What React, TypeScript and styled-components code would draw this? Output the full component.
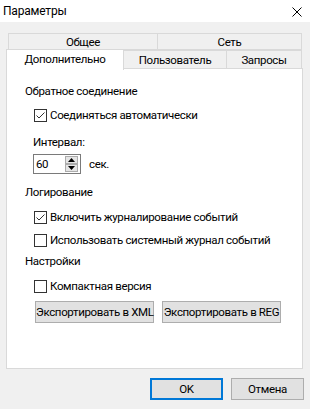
import styled, { createGlobalStyle, css } from "styled-components";

const GlobalStyle = createGlobalStyle`
  html, body {
    margin: 0;
    padding: 0;
    background: #f0f0f0;
  }
  * {
    box-sizing: border-box;
  }
`;

const font = `Roboto, "Liberation Sans", Arial, sans-serif`;

const StyledWindow = styled.div`
  width: 310px;
  height: 409px;
  background: #f0f0f0;
  display: flex;
  flex-direction: column;
  font-family: ${font};
  font-size: 11.5px;
  letter-spacing: -0.35px;
  color: #000;
  overflow: hidden;
`;

const StyledTitleBar = styled.div`
  height: 22px;
  background: #fff;
  display: flex;
  align-items: center;
  justify-content: space-between;
  padding: 0 8px 0 3px;
  font-size: 12px;
  letter-spacing: -0.2px;
`;

const StyledCloseButton = styled.span`
  width: 10px;
  height: 10px;
  display: flex;
  margin-top: 2px;
`;

const StyledBody = styled.div`
  padding: 11px 7px 0 6px;
  display: flex;
  flex-direction: column;
`;

const StyledTabRow = styled.div<{ $top?: boolean }>`
  display: flex;
  align-items: flex-end;
  height: ${(p) => (p.$top ? "17px" : "19px")};
  padding-left: ${(p) => (p.$top ? "2px" : "0")};
  margin-top: ${(p) => (p.$top ? "0" : "-1px")};
`;

const StyledTab = styled.div<{ $width: number; $selected?: boolean; $top?: boolean }>`
  width: ${(p) => p.$width}px;
  height: 18px;
  margin-left: -1px;
  border: 1px solid #d9d9d9;
  border-bottom: none;
  background: #f0f0f0;
  display: flex;
  align-items: center;
  justify-content: center;
  line-height: 14px;
  padding-top: 1px;
  &:first-child {
    margin-left: 0;
  }
  ${(p) =>
    p.$top &&
    css`
      height: 17px;
      border-bottom: 1px solid #d9d9d9;
      padding-top: 1px;
    `}
  ${(p) =>
    p.$selected &&
    css`
      height: 21px;
      margin-bottom: -2px;
      background: #fff;
      position: relative;
      z-index: 1;
      padding-bottom: 3px;
    `}
`;

const StyledPanel = styled.div`
  height: 301px;
  background: #fff;
  border: 1px solid #d9d9d9;
  display: flex;
  flex-direction: column;
  padding: 0 0 0 18px;
`;

const StyledLabel = styled.div<{ $top: number; $indent?: number }>`
  margin-top: ${(p) => p.$top}px;
  margin-left: ${(p) => p.$indent ?? 0}px;
  height: 16px;
  line-height: 16px;
  white-space: nowrap;
`;

const StyledCheckRow = styled.label<{ $top: number }>`
  margin-top: ${(p) => p.$top}px;
  margin-left: 9px;
  height: 16px;
  display: flex;
  align-items: center;
  gap: 3px;
  white-space: nowrap;
`;

const StyledCheckBox = styled.span`
  width: 13px;
  height: 13px;
  border: 1px solid #333;
  background: #fff;
  display: flex;
  align-items: center;
  justify-content: center;
  flex-shrink: 0;
`;

const StyledSpinRow = styled.div`
  margin-top: 4px;
  margin-left: 8px;
  height: 20px;
  display: flex;
  align-items: center;
  gap: 8px;
`;

const StyledSpinBox = styled.div`
  width: 48px;
  height: 20px;
  border: 1px solid #7a7a7a;
  background: #fff;
  display: flex;
  align-items: center;
  justify-content: space-between;
  padding: 0 2px 0 2px;
`;

const StyledSpinButtons = styled.div`
  display: flex;
  flex-direction: column;
`;

const StyledSpinArrow = styled.span`
  width: 13px;
  height: 8px;
  background: #e5e5e5;
  border: 1px solid #acacac;
  display: flex;
  align-items: center;
  justify-content: center;
`;

const StyledButtonRow = styled.div<{ $top: number }>`
  margin-top: ${(p) => p.$top}px;
  margin-left: 10px;
  display: flex;
  gap: 8px;
`;

const StyledButton = styled.button<{ $width: number; $default?: boolean }>`
  width: ${(p) => p.$width}px;
  height: 22px;
  background: #e1e1e1;
  border: 1px solid #adadad;
  font-family: ${font};
  font-size: 11.5px;
  letter-spacing: -0.35px;
  color: #000;
  padding: 0;
  white-space: nowrap;
  ${(p) =>
    p.$default &&
    css`
      border: 2px solid #0078d7;
    `}
`;

const StyledFooter = styled.div`
  margin-top: 9px;
  padding-right: 6px;
  display: flex;
  justify-content: flex-end;
  gap: 8px;
`;

function CheckBox({ checked }: { checked?: boolean }) {
  return (
    <StyledCheckBox>
      {checked ? (
        <svg width="11" height="11" viewBox="0 0 11 11">
          <path d="M1.5 5.5 L4 8 L9.5 2.5" fill="none" stroke="#333" strokeWidth="1" />
        </svg>
      ) : null}
    </StyledCheckBox>
  );
}

function Check({ top, checked, children }: { top: number; checked?: boolean; children: string }) {
  return (
    <StyledCheckRow $top={top}>
      <CheckBox checked={checked} />
      <span>{children}</span>
    </StyledCheckRow>
  );
}

export default function App() {
  return (
    <StyledWindow>
      <GlobalStyle />
      <StyledTitleBar>
        <span>Параметры</span>
        <StyledCloseButton>
          <svg width="10" height="10" viewBox="0 0 10 10">
            <path d="M0.5 0.5 L9.5 9.5 M9.5 0.5 L0.5 9.5" stroke="#000" strokeWidth="1" />
          </svg>
        </StyledCloseButton>
      </StyledTitleBar>
      <StyledBody>
        {/* верхний ряд вкладок */}
        <StyledTabRow $top>
          <StyledTab $top $width={150}>Общее</StyledTab>
          <StyledTab $top $width={145}>Сеть</StyledTab>
        </StyledTabRow>
        {/* нижний ряд вкладок */}
        <StyledTabRow>
          <StyledTab $selected $width={118}>Дополнительно</StyledTab>
          <StyledTab $width={104}>Пользователь</StyledTab>
          <StyledTab $width={76}>Запросы</StyledTab>
        </StyledTabRow>
        <StyledPanel>
          <StyledLabel $top={14}>Обратное соединение</StyledLabel>
          <Check top={8} checked>
            Соединяться автоматически
          </Check>
          <StyledLabel $top={11} $indent={8}>
            Интервал:
          </StyledLabel>
          <StyledSpinRow>
            <StyledSpinBox>
              <span>60</span>
              <StyledSpinButtons>
                <StyledSpinArrow>
                  <svg width="7" height="4" viewBox="0 0 7 4">
                    <path d="M0 4 L3.5 0 L7 4 Z" fill="#000" />
                  </svg>
                </StyledSpinArrow>
                <StyledSpinArrow>
                  <svg width="7" height="4" viewBox="0 0 7 4">
                    <path d="M0 0 L3.5 4 L7 0 Z" fill="#000" />
                  </svg>
                </StyledSpinArrow>
              </StyledSpinButtons>
            </StyledSpinBox>
            <span>сек.</span>
          </StyledSpinRow>
          <StyledLabel $top={10}>Логирование</StyledLabel>
          <Check top={9} checked>
            Включить журналирование событий
          </Check>
          <Check top={7}>Использовать системный журнал событий</Check>
          <StyledLabel $top={5}>Настройки</StyledLabel>
          <Check top={9}>Компактная версия</Check>
          <StyledButtonRow $top={7}>
            <StyledButton $width={119}>Экспортировать в XML</StyledButton>
            <StyledButton $width={119}>Экспортировать в REG</StyledButton>
          </StyledButtonRow>
        </StyledPanel>
      </StyledBody>
      <StyledFooter>
        <StyledButton $default $width={73}>
          OK
        </StyledButton>
        <StyledButton $width={73}>Отмена</StyledButton>
      </StyledFooter>
    </StyledWindow>
  );
}
